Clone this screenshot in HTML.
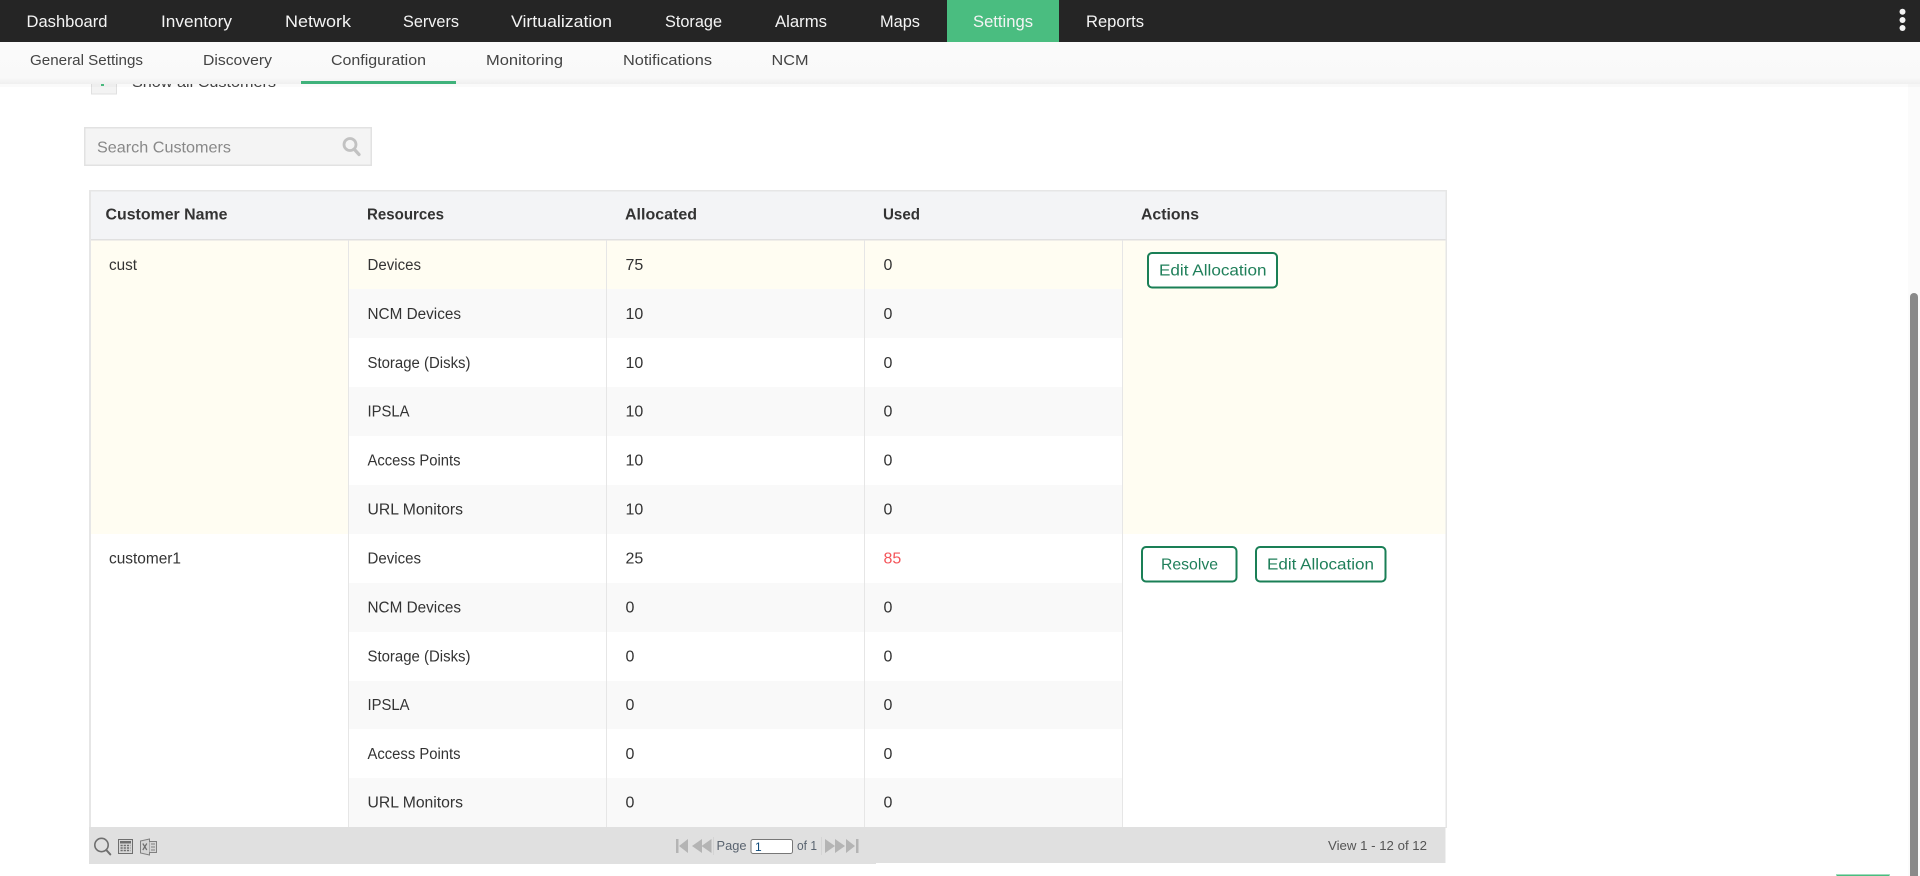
<!DOCTYPE html>
<html lang="en">
<head>
<meta charset="utf-8">
<title>Settings - Configuration</title>
<style>
html,body{margin:0;padding:0;width:1920px;height:876px;overflow:hidden;background:#fff}
svg{display:block}
text{font-family:"Liberation Sans",Arial,sans-serif}
.n{font-size:16.5px;fill:#f4f4f4}
.s{font-size:15px;fill:#444}
.h{font-size:16px;font-weight:bold;fill:#333}
.b{font-size:15.5px;fill:#333}
.d{font-size:16px;fill:#333}
.r{font-size:16px;fill:#f4555a}
.t{font-size:16px;fill:#1f7f5a}
.f{font-size:13px;fill:#5a6470}
</style>
</head>
<body>
<svg width="1920" height="876" viewBox="0 0 1920 876" xmlns="http://www.w3.org/2000/svg">
<defs>
<linearGradient id="sub" x1="0" y1="0" x2="0" y2="1">
<stop offset="0" stop-color="#fafafa"/><stop offset=".85" stop-color="#f9f9f9"/><stop offset="1" stop-color="#efefef"/>
</linearGradient>
</defs>
<rect width="1920" height="876" fill="#fff"/>

<!-- scrolled content behind header -->
<rect x="91.5" y="70" width="25" height="24" fill="#f3f3f3" stroke="#e0e0e0"/>
<rect x="101" y="84" width="3" height="2" fill="#4abd80"/>
<text x="132" y="87" class="s" textLength="144" lengthAdjust="spacingAndGlyphs">Show all Customers</text>

<!-- search -->
<rect x="84.75" y="127.75" width="286.5" height="37.5" fill="#f4f4f4" stroke="#e2e2e2" stroke-width="1.5"/>
<text x="97" y="152.5" font-size="16" fill="#888" textLength="134" lengthAdjust="spacingAndGlyphs">Search Customers</text>
<circle cx="350" cy="144.5" r="6" fill="none" stroke="#c2c2c2" stroke-width="2.8"/>
<path d="M354.5 149.5l4.5 5" stroke="#c2c2c2" stroke-width="3.2" stroke-linecap="round"/>

<!-- table -->
<rect x="89" y="190" width="1358" height="638" fill="#e6e6e6"/>
<rect x="91" y="191.5" width="1354.5" height="636" fill="#fff"/>
<rect x="91" y="191.5" width="1354.5" height="47.5" fill="#f3f4f6"/>
<rect x="91" y="239" width="1354.5" height="1.5" fill="#e0e0e0"/>

<!-- yellow highlight group -->
<rect x="91" y="240.5" width="257.5" height="293.5" fill="#fffdf2"/>
<rect x="1122.5" y="240.5" width="323" height="293.5" fill="#fffdf2"/>
<rect x="349" y="240.5" width="773" height="48.5" fill="#fffdf2"/>
<!-- zebra -->
<rect x="349" y="289" width="773" height="49" fill="#f9f9f9"/>
<rect x="349" y="387" width="773" height="49" fill="#f9f9f9"/>
<rect x="349" y="485" width="773" height="49" fill="#f9f9f9"/>
<rect x="349" y="583" width="773" height="49" fill="#f9f9f9"/>
<rect x="349" y="681" width="773" height="48" fill="#f9f9f9"/>
<rect x="349" y="778" width="773" height="49" fill="#f9f9f9"/>
<!-- column lines -->
<rect x="348" y="240" width="1" height="587" fill="#e6e6e6"/>
<rect x="606" y="240" width="1" height="587" fill="#e6e6e6"/>
<rect x="864" y="240" width="1" height="587" fill="#e6e6e6"/>
<rect x="1122" y="240" width="1" height="587" fill="#e6e6e6"/>

<!-- header row text -->
<text x="105.5" y="219.5" class="h" textLength="122" lengthAdjust="spacingAndGlyphs">Customer Name</text>
<text x="367" y="219.5" class="h" textLength="77" lengthAdjust="spacingAndGlyphs">Resources</text>
<text x="625" y="219.5" class="h" textLength="72" lengthAdjust="spacingAndGlyphs">Allocated</text>
<text x="883" y="219.5" class="h" textLength="37" lengthAdjust="spacingAndGlyphs">Used</text>
<text x="1141" y="219.5" class="h" textLength="58" lengthAdjust="spacingAndGlyphs">Actions</text>

<!-- group 1 -->
<text x="109" y="270" class="b" textLength="28" lengthAdjust="spacingAndGlyphs">cust</text>
<text x="367.5" y="270" class="b" textLength="53.5" lengthAdjust="spacingAndGlyphs">Devices</text>
<text x="625.5" y="270" class="d">75</text>
<text x="883.5" y="270" class="d">0</text>

<text x="367.5" y="319" class="b" textLength="93.5" lengthAdjust="spacingAndGlyphs">NCM Devices</text>
<text x="625.5" y="319" class="d">10</text>
<text x="883.5" y="319" class="d">0</text>

<text x="367.5" y="368" class="b" textLength="103" lengthAdjust="spacingAndGlyphs">Storage (Disks)</text>
<text x="625.5" y="368" class="d">10</text>
<text x="883.5" y="368" class="d">0</text>

<text x="367.5" y="416.5" class="b" textLength="42" lengthAdjust="spacingAndGlyphs">IPSLA</text>
<text x="625.5" y="416.5" class="d">10</text>
<text x="883.5" y="416.5" class="d">0</text>

<text x="367.5" y="465.5" class="b" textLength="93" lengthAdjust="spacingAndGlyphs">Access Points</text>
<text x="625.5" y="465.5" class="d">10</text>
<text x="883.5" y="465.5" class="d">0</text>

<text x="367.5" y="514.5" class="b" textLength="95.5" lengthAdjust="spacingAndGlyphs">URL Monitors</text>
<text x="625.5" y="514.5" class="d">10</text>
<text x="883.5" y="514.5" class="d">0</text>

<!-- group 2 -->
<text x="109" y="563.5" class="b" textLength="72" lengthAdjust="spacingAndGlyphs">customer1</text>
<text x="367.5" y="563.5" class="b" textLength="53.5" lengthAdjust="spacingAndGlyphs">Devices</text>
<text x="625.5" y="563.5" class="d">25</text>
<text x="883.5" y="563.5" class="r">85</text>

<text x="367.5" y="612.5" class="b" textLength="93.5" lengthAdjust="spacingAndGlyphs">NCM Devices</text>
<text x="625.5" y="612.5" class="d">0</text>
<text x="883.5" y="612.5" class="d">0</text>

<text x="367.5" y="661.5" class="b" textLength="103" lengthAdjust="spacingAndGlyphs">Storage (Disks)</text>
<text x="625.5" y="661.5" class="d">0</text>
<text x="883.5" y="661.5" class="d">0</text>

<text x="367.5" y="710" class="b" textLength="42" lengthAdjust="spacingAndGlyphs">IPSLA</text>
<text x="625.5" y="710" class="d">0</text>
<text x="883.5" y="710" class="d">0</text>

<text x="367.5" y="759" class="b" textLength="93" lengthAdjust="spacingAndGlyphs">Access Points</text>
<text x="625.5" y="759" class="d">0</text>
<text x="883.5" y="759" class="d">0</text>

<text x="367.5" y="807.5" class="b" textLength="95.5" lengthAdjust="spacingAndGlyphs">URL Monitors</text>
<text x="625.5" y="807.5" class="d">0</text>
<text x="883.5" y="807.5" class="d">0</text>

<!-- buttons -->
<rect x="1148" y="253" width="129" height="34.5" rx="4" fill="#fff" stroke="#1a7f56" stroke-width="2"/>
<text x="1159" y="275.5" class="t" textLength="107.5" lengthAdjust="spacingAndGlyphs">Edit Allocation</text>
<rect x="1142" y="547" width="94.5" height="34.5" rx="4" fill="#fff" stroke="#1a7f56" stroke-width="2"/>
<text x="1161" y="569.5" class="t" textLength="57" lengthAdjust="spacingAndGlyphs">Resolve</text>
<rect x="1256" y="547" width="129.5" height="34.5" rx="4" fill="#fff" stroke="#1a7f56" stroke-width="2"/>
<text x="1267" y="569.5" class="t" textLength="107" lengthAdjust="spacingAndGlyphs">Edit Allocation</text>

<!-- footer -->
<rect x="89" y="827" width="787" height="37" fill="#e0e0e0"/>
<rect x="876" y="827" width="569.5" height="36" fill="#e0e0e0"/>
<circle cx="101.5" cy="845" r="6.7" fill="none" stroke="#6f6f6f" stroke-width="1.6"/>
<path d="M106.3 850l4 4.4" stroke="#6f6f6f" stroke-width="2" stroke-linecap="round"/>
<rect x="118.5" y="839.5" width="14" height="14" fill="#d8d8d8" stroke="#6e6e6e"/>
<rect x="120" y="841" width="11" height="2.5" fill="#6e6e6e"/>
<path d="M120.5 845.5h10M120.5 848h10M120.5 850.5h10" stroke="#6e6e6e" stroke-width="1.4" stroke-dasharray="2.2 1"/>
<path d="M140.5 841l9-2v16l-9-2z" fill="#d6d6d6" stroke="#808080"/>
<path d="M149.5 841.5h7v11h-7" fill="#d6d6d6" stroke="#808080"/>
<path d="M142.8 843.5l4 6.5M146.8 843.5l-4 6.5" stroke="#6e6e6e" stroke-width="1.2"/>
<path d="M151 844h4M151 847h4M151 850h4" stroke="#808080"/>

<g fill="#b4b4b4">
<rect x="676" y="839" width="2.5" height="14"/>
<path d="M688 839v14l-9-7zM702 839v14l-10-7zM711.5 839v14l-10-7z"/>
<rect x="713" y="837" width="1" height="18" fill="#d4d4d4"/>
<rect x="821" y="837" width="1" height="18" fill="#d4d4d4"/>
<path d="M825 839v14l10-7zM835 839v14l10-7zM846 839v14l9-7z"/>
<rect x="856" y="839" width="2.5" height="14"/>
</g>
<text x="716.5" y="850" class="f" textLength="30" lengthAdjust="spacingAndGlyphs">Page</text>
<rect x="751" y="839.5" width="41.5" height="14" rx="2" fill="#fff" stroke="#777"/>
<text x="755" y="851" font-size="12" fill="#0d4a7a">1</text>
<text x="797" y="850" class="f" textLength="20" lengthAdjust="spacingAndGlyphs">of 1</text>
<text x="1328" y="850" font-size="13" fill="#555" textLength="99" lengthAdjust="spacingAndGlyphs">View 1 - 12 of 12</text>

<!-- bottom peek button -->
<rect x="1836" y="874" width="54" height="2" fill="#9fdcbc"/>
<rect x="1837" y="875" width="52" height="1" fill="#4abd80"/>

<!-- scrollbar -->
<rect x="1908" y="84" width="12" height="792" fill="#fbfbfb"/>
<rect x="1910" y="293" width="8" height="590" rx="4" fill="#8a8a8a"/>

<!-- sub nav -->
<rect x="0" y="84" width="1920" height="3" fill="#000" opacity=".02"/>
<rect x="0" y="42" width="1920" height="42" fill="url(#sub)"/>
<rect x="301" y="81" width="155" height="3" fill="#3fb27b"/>
<text x="30" y="65" class="s" textLength="113" lengthAdjust="spacingAndGlyphs">General Settings</text>
<text x="203" y="65" class="s" textLength="69" lengthAdjust="spacingAndGlyphs">Discovery</text>
<text x="331" y="65" class="s" textLength="95" lengthAdjust="spacingAndGlyphs">Configuration</text>
<text x="486" y="65" class="s" textLength="77" lengthAdjust="spacingAndGlyphs">Monitoring</text>
<text x="623" y="65" class="s" textLength="89" lengthAdjust="spacingAndGlyphs">Notifications</text>
<text x="771.5" y="65" class="s" textLength="37" lengthAdjust="spacingAndGlyphs">NCM</text>

<!-- top nav -->
<rect x="0" y="0" width="1920" height="42" fill="#252525"/>
<rect x="947" y="0" width="112" height="42" fill="#4abd80"/>
<text x="26.5" y="27" class="n" textLength="81" lengthAdjust="spacingAndGlyphs">Dashboard</text>
<text x="161" y="27" class="n" textLength="71" lengthAdjust="spacingAndGlyphs">Inventory</text>
<text x="285" y="27" class="n" textLength="66" lengthAdjust="spacingAndGlyphs">Network</text>
<text x="403" y="27" class="n" textLength="56" lengthAdjust="spacingAndGlyphs">Servers</text>
<text x="511" y="27" class="n" textLength="101" lengthAdjust="spacingAndGlyphs">Virtualization</text>
<text x="665" y="27" class="n" textLength="57" lengthAdjust="spacingAndGlyphs">Storage</text>
<text x="775" y="27" class="n" textLength="52" lengthAdjust="spacingAndGlyphs">Alarms</text>
<text x="880" y="27" class="n" textLength="40" lengthAdjust="spacingAndGlyphs">Maps</text>
<text x="973" y="27" class="n" textLength="60" lengthAdjust="spacingAndGlyphs">Settings</text>
<text x="1086" y="27" class="n" textLength="58" lengthAdjust="spacingAndGlyphs">Reports</text>
<circle cx="1902.5" cy="11.7" r="3" fill="#f4f4f4"/>
<circle cx="1902.5" cy="20" r="3" fill="#f4f4f4"/>
<circle cx="1902.5" cy="28" r="3" fill="#f4f4f4"/>
</svg>
</body>
</html>
